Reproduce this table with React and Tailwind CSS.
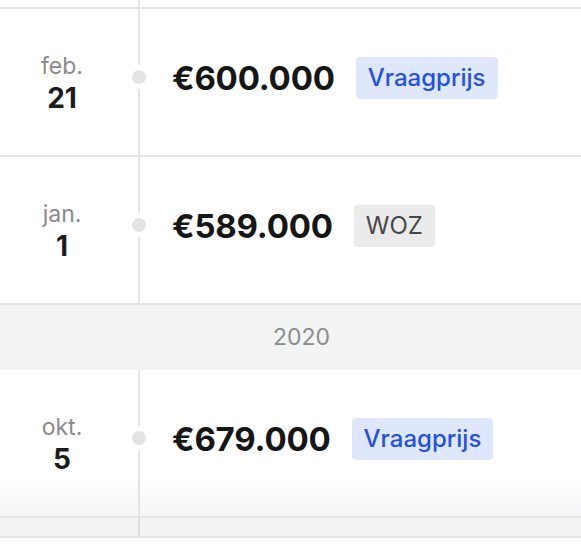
const rows2021 = [
  { month: "feb.", day: "21", price: "€600.000", tag: "Vraagprijs", kind: "ask" },
  { month: "jan.", day: "1", price: "€589.000", tag: "WOZ", kind: "woz" },
];

const rows2020 = [
  { month: "okt.", day: "5", price: "€679.000", tag: "Vraagprijs", kind: "ask", last: true },
];

const Tag = ({ kind, children }) => (
  <span
    className={
      kind === "ask"
        ? "rounded-[4px] bg-[#dfe7fd] px-[12px] py-[6px] text-[24px] leading-[30px] font-medium text-[#2450e6]"
        : "rounded-[4px] bg-[#ebebeb] px-[12px] py-[6px] text-[24px] leading-[30px] font-normal text-[#474747]"
    }
  >
    {children}
  </span>
);

const Row = ({ month, day, price, tag, kind, last }) => (
  <div
    className={
      "flex h-[148px] border-b-2 border-[#e6e6e6] " +
      (last ? "bg-linear-to-b from-white from-75% to-[#f4f5f7]" : "")
    }
  >
    <div className="flex w-[138px] flex-col items-center justify-center pr-[14px] pt-[2px]">
      <span className="text-[23px] leading-[30px] text-[#8a8a8a]">{month}</span>
      <span className="text-[28px] leading-[34px] font-bold text-[#1c1c1c]">{day}</span>
    </div>
    <div className="relative flex flex-1 items-center gap-[21px] border-l-2 border-[#e3e3e3] pb-[8px] pl-[32px]">
      <span className="absolute left-[-13px] top-1/2 mt-[-17px] h-[24px] w-[24px] rounded-full border-[5px] border-white bg-[#e4e4e4]" />
      <span className="text-[33px] leading-[40px] font-bold tracking-[-0.2px] text-[#161616]">{price}</span>
      <Tag kind={kind}>{tag}</Tag>
    </div>
  </div>
);

export default function App() {
  return (
    <div className="h-[556px] w-[581px] overflow-hidden bg-white font-['Inter',sans-serif]">
      <div className="flex h-[9px] border-b-2 border-[#e6e6e6]">
        <div className="w-[138px]" />
        <div className="flex-1 border-l-2 border-[#e3e3e3]" />
      </div>
      {rows2021.map((r) => (
        <Row key={r.price} {...r} />
      ))}
      <div className="flex h-[65px] items-center justify-center bg-[#f2f3f3] pl-[22px] text-[23px] text-[#8c8c8c]">
        2020
      </div>
      {rows2020.map((r) => (
        <Row key={r.price} {...r} />
      ))}
      <div className="flex h-[20px] border-b-2 border-[#e6e6e6] bg-[#f3f3f4]">
        <div className="w-[138px]" />
        <div className="flex-1 border-l-2 border-[#dedede]" />
      </div>
    </div>
  );
}
